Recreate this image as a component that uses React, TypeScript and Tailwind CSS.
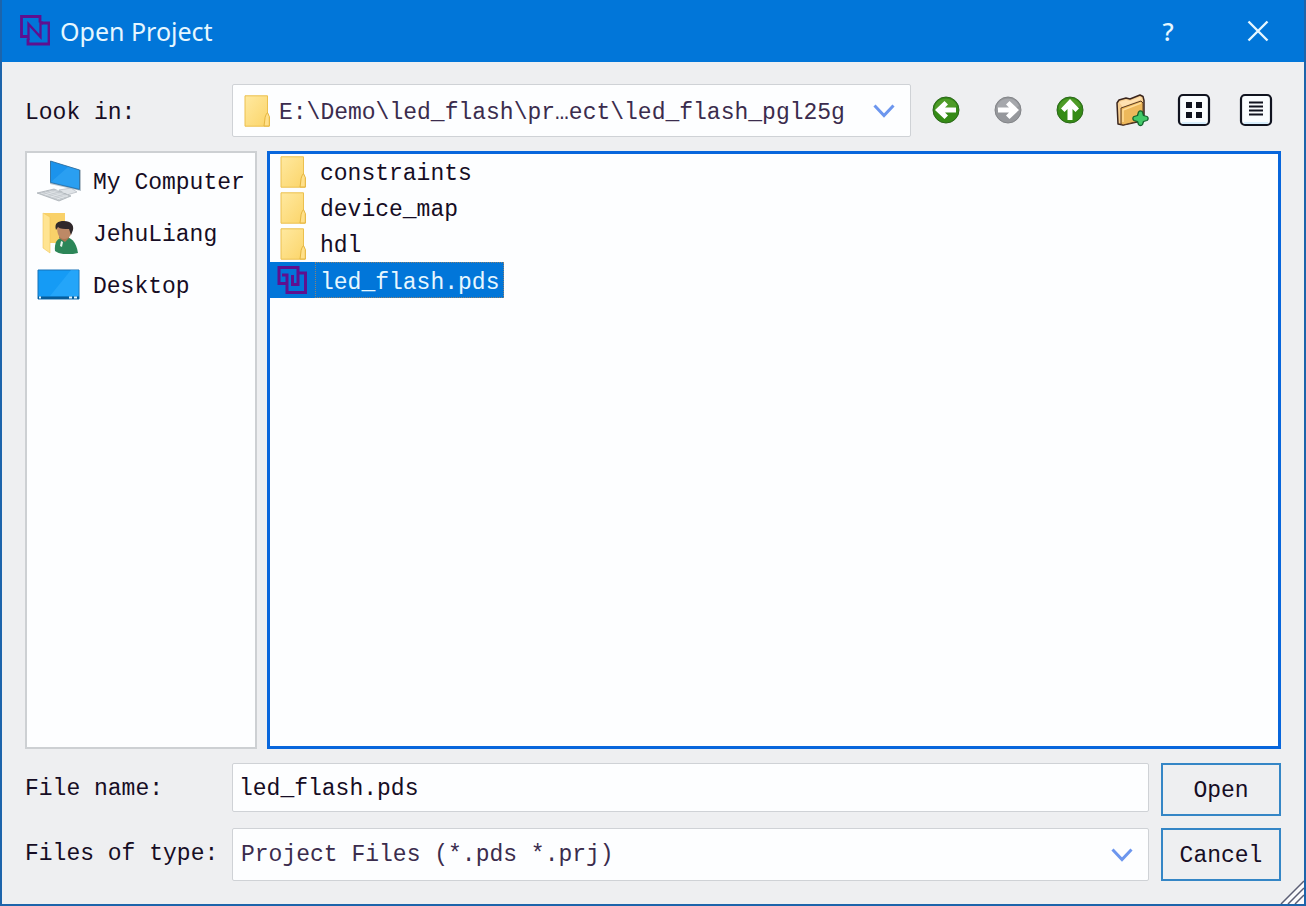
import React, { useState } from "react";

const FOLDERS = ["constraints", "device_map", "hdl"];
const PROJECT_FILE = "led_flash.pds";
const CURRENT_PATH = "E:\\Demo\\led_flash\\pr…ect\\led_flash_pgl25g";

function AppLogo({ className }: { className?: string }) {
  return (
    <svg viewBox="0 0 32 32" className={className} fill="none" stroke="#5f108f" strokeWidth="2.800" aria-hidden="true">
      <path d="M9 21.500H3.500V1.500H22v6" />
      <path d="M24 8h7v21H10v-5.500" />
      <path d="M10.500 25V9l12 13V6" strokeWidth="2.300" />
      <path d="M22 8h3M7 21.500h4" />
    </svg>
  );
}

function FileLogo() {
  return (
    <svg viewBox="0 0 32 32" className="h-8 w-8" fill="none" stroke="#5f108f" strokeWidth="3" aria-hidden="true">
      <path d="M11 19.500H3V3.500h19v17h-5.500V11" />
      <path d="M6 11h5v17.500h18.500V9H22" />
    </svg>
  );
}

function FolderIcon() {
  return (
    <svg viewBox="0 0 26 32" className="h-8 w-[26px] shrink-0" aria-hidden="true">
      <defs>
        <linearGradient id="folder" x1="0" y1="0" x2="1" y2="1">
          <stop offset="0" stopColor="#ffe9a0" />
          <stop offset="1" stopColor="#fbd468" />
        </linearGradient>
      </defs>
      <path d="M1 .8h22.500v19l1.800 2.200v9.200H1z" fill="url(#folder)" stroke="#ecc04e" />
      <path d="M23.500 17.500c-1.800 2.500-2.500 4-2.700 7.500l-.8 6h5.300v-9.500z" fill="#ffe08a" stroke="#e5b53e" />
    </svg>
  );
}

function ComputerIcon() {
  return (
    <svg viewBox="0 0 44 42" className="h-[42px] w-11" aria-hidden="true">
      <path d="M22 30l12-2 6 4-10 3z" fill="#dfe3e7" stroke="#b2b8be" strokeWidth=".7" />
      <path d="M13 1l31 9v21l-31-7z" fill="#b8c4cd" />
      <path d="M13.500 1l29 9v19.500l-29-7z" fill="#1b93ec" stroke="#28699b" strokeWidth=".8" />
      <path d="M14 22l17-15 11 3.500V28.500z" fill="#35a7f5" opacity=".6" />
      <path d="M0 33l17-4 17 7-12 5z" fill="#c6cbd0" stroke="#a4aab0" strokeWidth=".7" />
      <path d="M4 33l19 6M8 32l19 6M12 31l19 6M8 35l14-5M14 37l14-5M20 39l11-4" stroke="#edf0f2" strokeWidth=".5" />
    </svg>
  );
}

function UserFolderIcon() {
  return (
    <svg viewBox="0 0 44 42" className="h-[42px] w-11" aria-hidden="true">
      <path d="M7 1h21v30H7z" fill="#f9d169" />
      <path d="M6 1l7 4v36l-7-5z" fill="#ffe492" stroke="#f0c760" strokeWidth=".6" />
      <path d="M18 39c-1-11 4-13 9-14 7 0 12 4 14 16-7 2-18 2-23-2z" fill="#2c8658" />
      <path d="M22 26l6 4 4-4v-5h-9z" fill="#a87552" />
      <path d="M20 14c0 8 2 13 7 13 6 0 8-5 8-12 0-4-15-6-15-1z" fill="#bd8966" />
      <path d="M19 18c-2-7 2-9 8-9 7 0 10 4 9 9l-2 5-2-6c-5 0-9 0-11-2z" fill="#30282a" />
      <path d="M24 29l2 1-1 5-2-1z" fill="#e6f2e8" />
    </svg>
  );
}

function DesktopIcon() {
  return (
    <svg viewBox="0 0 44 42" className="h-[42px] w-11" aria-hidden="true">
      <path d="M1 6h41v29H1z" fill="#159bf5" stroke="#1673b8" />
      <path d="M13 32L34 6h7.500v26z" fill="#2eabfb" opacity=".6" />
      <path d="M1 32.500h41v2.500H1z" fill="#075c99" />
      <path d="M2 33.500h2M32 33.500h3M37 33.500h3" stroke="#e3f6ff" strokeWidth="1.800" />
    </svg>
  );
}

function ArrowIcon({ kind }: { kind: "back" | "forward" | "up" }) {
  const disabled = kind === "forward";
  const angle = kind === "back" ? 0 : kind === "forward" ? 180 : 90;
  return (
    <svg viewBox="0 0 28 28" className="h-7 w-7" aria-hidden="true">
      <circle cx="14" cy="14" r="13" fill={disabled ? "#96989c" : "#358b16"} stroke={disabled ? "#828488" : "#2a6719"} />
      <path d="M3 10a12 12 0 0 1 22 0c-7 4-14 0-22 4z" fill={disabled ? "#b4b6ba" : "#63a936"} opacity=".55" />
      <path d="M3 14l9.500-9 3.500 3.500-3 3h11v5H13l3 3-3.500 3.500z" fill="#fff" transform={`rotate(${angle} 14 14)`} />
    </svg>
  );
}

function NewFolderIcon() {
  return (
    <svg viewBox="0 0 34 34" className="h-[34px] w-[34px]" strokeLinejoin="round" aria-hidden="true">
      <path d="M3 31L2 10l2-3 7-2 4 1 10-4 3 1.500 1 4v20L8 32z" fill="#f6ce91" stroke="#3a251d" strokeWidth="1.500" />
      <path d="M4 9l7-2 4 1 10-4 2 2L8 14z" fill="#ffe2b1" />
      <path d="M6 31V15l20-7 2 2v17L8 32z" fill="#edb85b" stroke="#5a3b22" />
      <path d="M8 29V17l18-7" fill="none" stroke="#ffdc98" strokeWidth="1.500" />
      <path
        d="M23.500 19c1-1.500 3.500-1.500 4 0l1 3.500 3.500 1c1.500.8 1.500 3 0 4l-3.500 1-1 3c-.8 1.300-3.200 1.300-4 0l-1-3-3.500-1c-1.500-1-1.500-3.200 0-4l3.500-1z"
        fill="#43c969"
        stroke="#12632d"
        strokeWidth="1.300"
      />
    </svg>
  );
}

function ViewIcon({ kind }: { kind: "list" | "detail" }) {
  return (
    <svg viewBox="0 0 34 34" className="h-[34px] w-[34px]" aria-hidden="true">
      <rect x="2" y="2" width="30" height="30" rx="4" fill="#fafdff" stroke="#10131f" strokeWidth="2.200" />
      <path d="M5 30h24" stroke="#cbe8fc" strokeWidth="1.500" />
      {kind === "list" ? (
        <path d="M9 9h6v6H9zM19 9h6v6h-6zM9 19h6v6H9zM19 19h6v6h-6z" fill="#10131f" />
      ) : (
        <path d="M10 9.500h14M10 13.500h14M10 17.500h14M10 21.500h14" stroke="#10131f" strokeWidth="2" />
      )}
    </svg>
  );
}

function Chevron() {
  return (
    <svg
      viewBox="0 0 22 14"
      className="pointer-events-none absolute right-4 top-1/2 h-3.5 w-[22px] -translate-y-1/2"
      fill="none"
      stroke="#6c96ee"
      strokeWidth="3"
      aria-hidden="true"
    >
      <path d="M1.500 1.500L11 11.500l9.500-10" />
    </svg>
  );
}

const PLACES = [
  { label: "My Computer", icon: <ComputerIcon /> },
  { label: "JehuLiang", icon: <UserFolderIcon /> },
  { label: "Desktop", icon: <DesktopIcon /> },
];

const TOOLS = [
  { label: "Back", icon: <ArrowIcon kind="back" /> },
  { label: "Forward", icon: <ArrowIcon kind="forward" /> },
  { label: "Parent Directory", icon: <ArrowIcon kind="up" /> },
  { label: "Create New Folder", icon: <NewFolderIcon /> },
  { label: "List View", icon: <ViewIcon kind="list" /> },
  { label: "Detail View", icon: <ViewIcon kind="detail" /> },
];

export default function App() {
  const [selected, setSelected] = useState(PROJECT_FILE);
  const [fileName, setFileName] = useState(PROJECT_FILE);

  const pick = (name: string) => {
    setSelected(name);
    setFileName(name);
  };

  return (
    <div className="relative flex min-h-screen flex-col border-2 border-t-0 border-[#1c64ab] bg-[#eeeff1] font-['Liberation_Mono',monospace] text-[23px] leading-8 text-[#160d24]">
      {/* Title bar */}
      <header className="flex h-[62px] shrink-0 items-center bg-[#0176d9] pl-4 pr-6 text-[#e6f7ff]">
        <AppLogo className="h-8 w-8" />
        <h1 className="ml-2.5 flex-1 font-['Noto_Sans',sans-serif] text-[25px]">Open Project</h1>
        <button type="button" aria-label="Help" className="mr-12 w-10 font-['Noto_Sans',sans-serif] text-[25px] font-medium">
          ?
        </button>
        <button type="button" aria-label="Close" className="flex w-11 justify-center">
          <svg viewBox="0 0 22 22" className="h-[22px] w-[22px]" stroke="currentColor" strokeWidth="2.400" aria-hidden="true">
            <path d="M1.500 1.500l19 19M20.500 1.500l-19 19" />
          </svg>
        </button>
      </header>

      <main className="flex flex-1 flex-col px-[23px] pb-[23px] pt-[22px]">
        {/* Path and toolbar */}
        <div className="-mr-1.5 flex h-[53px] items-center">
          <label htmlFor="look-in" className="w-[207px] shrink-0 pt-1">
            Look in:
          </label>
          <div className="relative h-full min-w-0 flex-1">
            <div className="pointer-events-none absolute left-3 top-1/2 flex -translate-y-1/2">
              <FolderIcon />
            </div>
            <select
              id="look-in"
              className="h-full w-full appearance-none rounded-xs border border-[#cfd2d6] bg-[#fdfeff] pl-[46px] pr-10 pt-1 text-[#3b2c4d]"
            >
              <option>{CURRENT_PATH}</option>
            </select>
            <Chevron />
          </div>
          <div className="ml-1 flex">
            {TOOLS.map((tool) => (
              <button
                key={tool.label}
                type="button"
                aria-label={tool.label}
                className="flex h-[53px] w-[62px] items-center justify-center pb-0.5"
              >
                {tool.icon}
              </button>
            ))}
          </div>
        </div>

        {/* Places and files */}
        <div className="mt-3.5 flex flex-1 gap-2.5">
          <nav className="w-[232px] shrink-0 border-2 border-[#cdd0d3] bg-[#fdfeff] pt-0.5">
            {PLACES.map((place) => (
              <button key={place.label} type="button" className="flex h-[52px] w-full items-center gap-3 whitespace-nowrap pl-2.5 text-left">
                <span className="shrink-0">{place.icon}</span>
                <span className="pt-1">{place.label}</span>
              </button>
            ))}
          </nav>

          <ul className="min-w-0 flex-1 border-3 border-[#0866dc] bg-[#fdfeff]">
            {FOLDERS.map((name) => (
              <li key={name}>
                <button type="button" onClick={() => setSelected(name)} className="flex h-9 items-center pl-2.5 text-left">
                  <FolderIcon />
                  <span
                    className={
                      selected === name
                        ? "ml-2.5 h-9 bg-[#0176d9] px-1 pt-1 text-[#e6f7ff]"
                        : "ml-2.5 h-9 px-1 pt-1"
                    }
                  >
                    {name}
                  </span>
                </button>
              </li>
            ))}
            <li>
              <button
                type="button"
                onClick={() => pick(PROJECT_FILE)}
                className={
                  selected === PROJECT_FILE
                    ? "flex h-9 items-center bg-[#0176d9] pl-1.5 text-left text-[#e6f7ff]"
                    : "flex h-9 items-center pl-1.5 text-left"
                }
              >
                <FileLogo />
                <span className="ml-[7px] h-9 border border-dotted border-[#8a8272] px-1 pt-1">{PROJECT_FILE}</span>
              </button>
            </li>
          </ul>
        </div>

        {/* File name and type */}
        <form
          className="mt-3.5 grid grid-cols-[195px_minmax(0,1fr)_120px] gap-3"
          onSubmit={(e) => e.preventDefault()}
        >
          <label htmlFor="file-name" className="mt-2.5 whitespace-nowrap">
            File name:
          </label>
          <input
            id="file-name"
            type="text"
            value={fileName}
            onChange={(e) => setFileName(e.target.value)}
            className="h-[49px] w-full rounded-xs border border-[#cfd2d6] bg-[#fdfeff] px-1.5 pt-0.5"
          />
          <button type="submit" className="h-[53px] border-2 border-[#3486c6] pt-0.5">
            Open
          </button>

          <label htmlFor="file-type" className="mt-2.5 whitespace-nowrap">
            Files of type:
          </label>
          <div className="relative h-[53px]">
            <select
              id="file-type"
              className="h-full w-full appearance-none rounded-xs border border-[#cfd2d6] bg-[#fdfeff] pl-2 pr-11 text-[#3b2c4d]"
            >
              <option>Project Files (*.pds *.prj)</option>
            </select>
            <Chevron />
          </div>
          <button type="button" className="h-[53px] border-2 border-[#3486c6] pt-0.5">
            Cancel
          </button>
        </form>
      </main>

      {/* Resize grip */}
      <svg viewBox="0 0 24 24" className="absolute bottom-0 right-0 h-6 w-6" stroke="#5c5f75" strokeWidth="1.500" aria-hidden="true">
        <path d="M1 24L24 1v23z" fill="#fbfbfd" stroke="none" />
        <path d="M1 24L24 1M8 24L24 8M15 24l9-9" />
      </svg>
    </div>
  );
}
